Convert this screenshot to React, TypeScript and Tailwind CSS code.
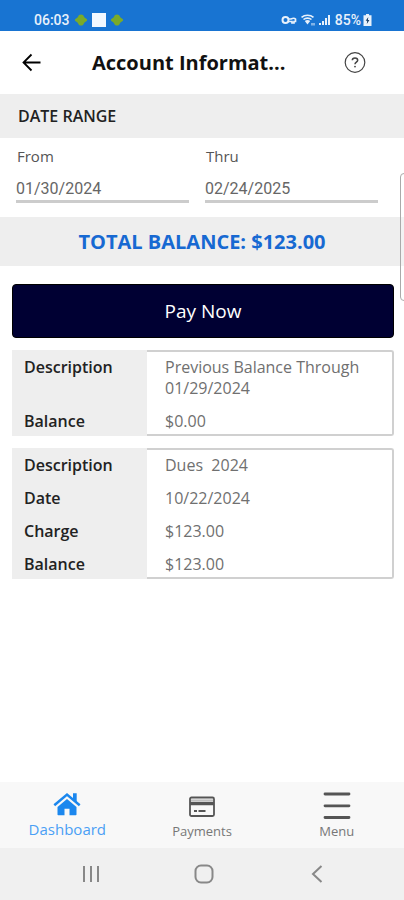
import { useState } from 'react';

type Row = { label: string; value: string };

const records: Row[][] = [
  [
    { label: 'Description', value: 'Previous Balance Through 01/29/2024' },
    { label: 'Balance', value: '$0.00' },
  ],
  [
    { label: 'Description', value: 'Dues  2024' },
    { label: 'Date', value: '10/22/2024' },
    { label: 'Charge', value: '$123.00' },
    { label: 'Balance', value: '$123.00' },
  ],
];

export default function App() {
  return (
    <div className="relative flex min-h-screen flex-col overflow-hidden bg-white font-['Open_Sans',sans-serif] text-[#222]">
      <StatusBar />
      <Header />

      <main className="flex-1">
        <h2 className="bg-[#eeeeee] px-[18px] py-3 text-base leading-5 font-semibold">DATE RANGE</h2>
        <form className="grid grid-cols-2 gap-4 px-4 pt-2 pr-[26px] pb-[14px]">
          <DateField id="from" label="From" initial="01/30/2024" />
          <DateField id="thru" label="Thru" initial="02/24/2025" />
        </form>

        <p className="bg-[#eeeeee] py-3 text-center text-xl leading-[25px] font-bold text-[#1769d2]">
          TOTAL BALANCE: $123.00
        </p>

        <div className="flex flex-col gap-3 px-3 pt-[18px] pr-[10px]">
          <button
            type="button"
            className="h-[54px] rounded-[4px] border border-black bg-[#000033] text-[19px] font-medium text-white"
          >
            Pay Now
          </button>
          {records.map((rows, i) => (
            <RecordTable key={i} rows={rows} />
          ))}
        </div>
      </main>

      <TabBar />
      <SystemNav />

      {/* Edge panel handle */}
      <div className="pointer-events-none absolute top-[173px] -right-1 h-[128px] w-2 rounded-l-[4px] border border-[#aaa] bg-white/30" />
    </div>
  );
}

function StatusBar() {
  return (
    <div className="flex h-[31px] items-end justify-between bg-[#1874d2] pr-8 pb-[2px] pl-[34px] font-[Roboto,sans-serif] text-sm leading-[18px] font-medium text-[#e8f1fb]">
      <div className="flex items-center gap-1">
        <span>06:03</span>
        <Android />
        <span className="size-[14px] bg-[#f2f8ff]" />
        <Android />
      </div>
      <div className="flex items-center gap-1">
        {/* vpn key */}
        <svg className="h-[10px] w-4" viewBox="0 0 16 10" fill="none" stroke="currentColor" strokeWidth="2">
          <circle cx="4.500" cy="5" r="3" />
          <path d="M7.500 4h2.500q3-1.500 4.500 0v2.500h-1.500v1.500h-2V6.500H7.500" strokeWidth="1.700" />
        </svg>
        {/* wifi */}
        <svg className="h-3 w-[14px]" viewBox="0 0 14 12" fill="none" stroke="currentColor" strokeWidth="1.600">
          <path d="M.5 3.300c3.300-2.800 8.700-2.800 12 0M2.500 5.500c2.200-1.900 5.800-1.900 8 0" />
          <path d="M3.800 7c1.500-1.300 3.900-1.300 5.400 0L6.500 10.600z" fill="currentColor" stroke="none" />
          <path d="M11 9v2.500M13 9v2.500" strokeWidth="1" />
        </svg>
        {/* signal */}
        <svg className="h-3 w-3" viewBox="0 0 12 12" fill="currentColor">
          <path d="M0 9h2v2H0zM3 7h2v4H3zM6 4h2v7H6zM9 1h2v10H9z" />
        </svg>
        <span>85%</span>
        {/* battery */}
        <svg className="-ml-[2px] h-3 w-[9px]" viewBox="0 0 9 12">
          <path d="M3 0h3v1.200H8.500V12H.5V1.200H3z" fill="currentColor" />
          <path d="M5.300 3 2.700 6.800h1.500l-.4 3.200 2.600-4H4.900z" fill="#173a62" />
        </svg>
      </div>
    </div>
  );
}

function Android() {
  return (
    <svg className="mx-px h-3 w-3" viewBox="0 0 12 12" fill="#7aaa2a">
      <path d="M4 1Q6 0 8 1L9.500 3.500 12 5.200v1.600L9.500 8.500 8 11Q6 12 4 11L2.500 8.500 0 6.800V5.200l2.500-1.700z" />
    </svg>
  );
}

function Header() {
  return (
    <header className="flex h-[63px] items-center px-5 pr-[38px]">
      <button type="button" aria-label="Back" className="p-[2px] text-black">
        <svg className="size-5" viewBox="0 0 20 20" fill="none" stroke="currentColor" strokeWidth="1.800">
          <path d="M18.500 9.500H2M9.500 1.500 1.500 9.500l8 8" />
        </svg>
      </button>
      <h1 className="ml-12 text-xl leading-7 font-bold text-[#111]">Account Informat...</h1>
      <button type="button" aria-label="Help" className="ml-auto text-[#444]">
        <svg className="size-[22px]" viewBox="0 0 22 22" fill="none" stroke="currentColor" strokeWidth="1.200">
          <circle cx="11" cy="10.500" r="9.800" />
          <path d="M8.300 8.300C8.300 5.300 13.700 5.300 13.700 8.300c0 1.800-2.700 2-2.700 4" strokeWidth="1.500" />
          <circle cx="11" cy="14.600" r=".9" fill="currentColor" stroke="none" />
        </svg>
      </button>
    </header>
  );
}

function DateField({ id, label, initial }: { id: string; label: string; initial: string }) {
  const [value, setValue] = useState(initial);
  return (
    <div>
      <label htmlFor={id} className="block px-px text-[15px] leading-5 text-[#555]">
        {label}
      </label>
      <input
        id={id}
        value={value}
        onChange={(e) => setValue(e.target.value)}
        className="mt-[11px] block h-[26px] w-full border-b-[3px] border-[#cccccc] font-[Roboto,sans-serif] text-base text-[#666] outline-none"
      />
    </div>
  );
}

function RecordTable({ rows }: { rows: Row[] }) {
  return (
    <table className="w-full border-separate border-spacing-0 text-left text-base leading-[21px]">
      <tbody>
        {rows.map((row) => (
          <tr key={row.label} className="group">
            <th
              scope="row"
              className="w-[135px] bg-[#eeeeee] px-3 py-[6px] align-top font-semibold group-first:pt-[7px] group-last:pb-1"
            >
              {row.label}
            </th>
            <td className="border-r-2 border-[#d0d0d0] py-[6px] pr-6 pl-[18px] align-top whitespace-pre-wrap text-[#707070] group-first:rounded-tr-[3px] group-first:border-t-2 group-first:pt-[5px] group-last:rounded-br-[3px] group-last:border-b-2 group-last:pb-[2px]">
              {row.value}
            </td>
          </tr>
        ))}
      </tbody>
    </table>
  );
}

function TabBar() {
  return (
    <nav className="grid h-[66px] grid-cols-3 bg-[#f8f8f8] text-[13px] leading-[18px] text-[#777]">
      <a
        href="#dashboard"
        aria-current="page"
        className="flex flex-col items-center justify-end gap-1 pb-[10px] text-[15px] text-[#4a9ff5]"
      >
        <svg className="h-6 w-7" viewBox="0 0 28 24" fill="#1b87ee">
          <path d="M14 7 4.500 15v7.500q0 .8.8.8H11.500v-6.500h5v6.500h6.200q.8 0 .8-.8V15z" />
          <path d="M1.300 13.300 14 2.600l12.700 10.700" fill="none" stroke="#1b87ee" strokeWidth="2.500" />
          <path d="M20 1.200h3.700v9L20 7z" />
        </svg>
        Dashboard
      </a>
      <a href="#payments" className="flex flex-col items-center justify-end gap-1 pb-2">
        <svg className="h-[22px] w-[26px]" viewBox="0 0 26 22" fill="none" stroke="#555" strokeWidth="1.800">
          <rect x="1" y="1.500" width="24" height="18.500" rx="1.500" />
          <path d="M2 4.200h22" stroke="#bbb" strokeWidth="1.500" />
          <path d="M1 7.500h24" strokeWidth="3.500" />
          <path d="M5 15h3M9.500 15h7" strokeWidth="2" />
        </svg>
        Payments
      </a>
      <a href="#menu" className="flex flex-col items-center justify-end gap-[2px] pb-2">
        <svg className="h-7 w-7" viewBox="0 0 28 28" stroke="#555" strokeWidth="2.800" strokeLinecap="round">
          <path d="M2 2h24M2 13.800h24M2 25.500h24" />
        </svg>
        Menu
      </a>
    </nav>
  );
}

function SystemNav() {
  return (
    <div className="grid h-[52px] grid-cols-3 items-center justify-items-center bg-[#f0f0f0] pr-[31px] pl-[35px] text-[#888]">
      <button type="button" aria-label="Recent apps">
        <svg className="h-[18px] w-[18px]" viewBox="0 0 18 18" stroke="currentColor" strokeWidth="2">
          <path d="M2 1v16M9 1v16M16 1v16" />
        </svg>
      </button>
      <button type="button" aria-label="Home">
        <svg className="size-5" viewBox="0 0 20 20" fill="none" stroke="currentColor" strokeWidth="2">
          <rect x="1.500" y="1.500" width="17" height="17" rx="5.500" />
        </svg>
      </button>
      <button type="button" aria-label="Go back">
        <svg className="h-[18px] w-3" viewBox="0 0 12 18" fill="none" stroke="currentColor" strokeWidth="2">
          <path d="M10.500 1 2 9l8.500 8" />
        </svg>
      </button>
    </div>
  );
}
